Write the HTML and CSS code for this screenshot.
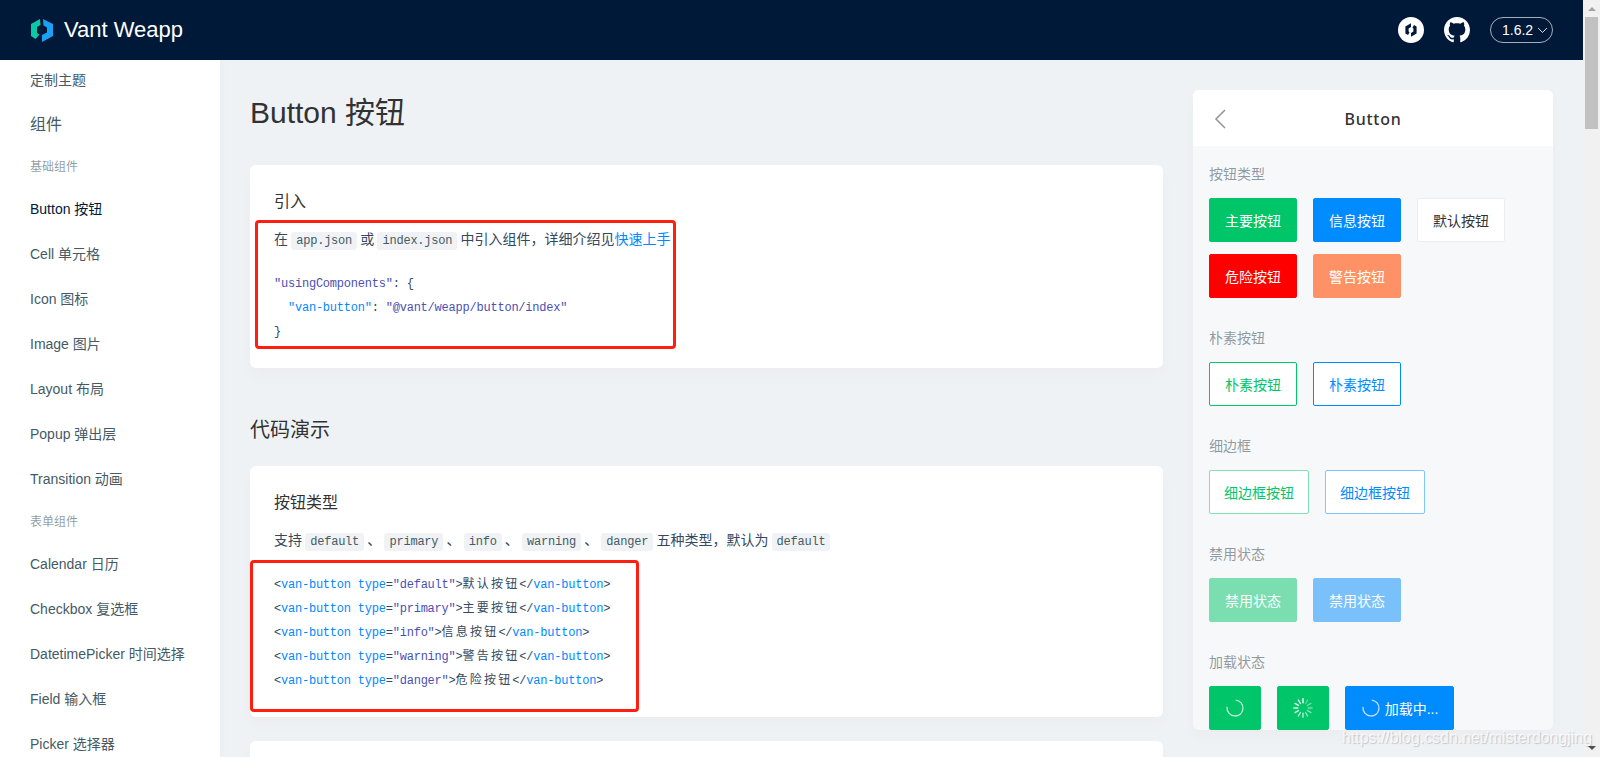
FILE: index.html
```html
<!DOCTYPE html>
<html lang="zh">
<head>
<meta charset="utf-8">
<title>Button 按钮 - Vant Weapp</title>
<link rel="stylesheet" href="styles.css">
</head>
<body>
<div class="page">
  <header class="topbar">
    <div class="brand">
      <svg class="logo" viewBox="0 0 22 24" width="22" height="24">
        <polygon points="0,6 9,1 9.5,7 6,9 6,15 8.5,16.5 4.5,21 0,18" fill="#0cc8a6"/>
        <polygon points="12,1 22,6 22,18 11,24 11,17 16,14.5 16,9.5 12.5,7.5" fill="#1aa0f5"/>
      </svg>
      <span class="brand-name">Vant Weapp</span>
    </div>
    <div class="top-actions">
      <svg class="round-icon" viewBox="0 0 26 26" width="26" height="26">
        <circle cx="13" cy="13" r="13" fill="#fff"/>
        <polygon points="13,6.3 7.4,9.5 7.4,16.5 10,18 11.6,15.3 10.6,14.6 10.6,11.4 13,10" fill="#001938"/>
        <polygon points="13,19.7 18.6,16.5 18.6,9.5 16,8 14.4,10.7 15.4,11.4 15.4,14.6 13,16" fill="#001938"/>
      </svg>
      <svg class="round-icon" viewBox="0 0 16 16" width="26" height="26">
        <path fill="#fff" d="M8 0C3.58 0 0 3.58 0 8c0 3.54 2.29 6.53 5.47 7.59.4.07.55-.17.55-.38 0-.19-.01-.82-.01-1.49-2.01.37-2.53-.49-2.69-.94-.09-.23-.48-.94-.82-1.13-.28-.15-.68-.52-.01-.53.63-.01 1.08.58 1.23.82.72 1.21 1.87.87 2.33.66.07-.52.28-.87.51-1.07-1.78-.2-3.64-.89-3.64-3.95 0-.87.31-1.59.82-2.15-.08-.2-.36-1.02.08-2.12 0 0 .67-.21 2.2.82.64-.18 1.32-.27 2-.27s1.36.09 2 .27c1.53-1.04 2.2-.82 2.2-.82.44 1.1.16 1.92.08 2.12.51.56.82 1.27.82 2.15 0 3.07-1.87 3.75-3.65 3.95.29.25.54.73.54 1.48 0 1.07-.01 1.93-.01 2.2 0 .21.15.46.55.38A8.01 8.01 0 0 0 16 8c0-4.42-3.58-8-8-8z"/>
      </svg>
      <div class="version">
        <span>1.6.2</span>
        <svg viewBox="0 0 12 8" width="11" height="7"><path d="M1 1.2 L6 6.2 L11 1.2" fill="none" stroke="#fff" stroke-width="1"/></svg>
      </div>
    </div>
  </header>
  <div class="body-row">
    <nav class="sidebar">
      <a class="nav-first">定制主题</a>
      <div class="nav-title">组件</div>
      <div class="nav-group nav-group-top">基础组件</div>
      <a class="nav-item active">Button 按钮</a>
      <a class="nav-item">Cell 单元格</a>
      <a class="nav-item">Icon 图标</a>
      <a class="nav-item">Image 图片</a>
      <a class="nav-item">Layout 布局</a>
      <a class="nav-item">Popup 弹出层</a>
      <a class="nav-item">Transition 动画</a>
      <div class="nav-group">表单组件</div>
      <a class="nav-item">Calendar 日历</a>
      <a class="nav-item">Checkbox 复选框</a>
      <a class="nav-item">DatetimePicker 时间选择</a>
      <a class="nav-item">Field 输入框</a>
      <a class="nav-item">Picker 选择器</a>
    </nav>
    <main class="doc">
      <h1 class="doc-title">Button 按钮</h1>
      <section class="card">
        <h3 class="card-title">引入</h3>
        <p class="card-text">在 <code class="chip">app.json</code> 或 <code class="chip">index.json</code> 中引入组件，详细介绍见<a class="link">快速上手</a></p>
        <div class="code">
          <div class="code-line"><span class="str">"usingComponents"</span>: {</div>
          <div class="code-line">  <span class="key">"van-button"</span>: <span class="str">"@vant/weapp/button/index"</span></div>
          <div class="code-line">}</div>
        </div>
        <div class="mark mark-a"></div>
      </section>
      <h2 class="doc-section">代码演示</h2>
      <section class="card">
        <h3 class="card-title">按钮类型</h3>
        <p class="card-text">支持 <code class="chip">default</code> 、 <code class="chip">primary</code> 、 <code class="chip">info</code> 、 <code class="chip">warning</code> 、 <code class="chip">danger</code> 五种类型，默认为 <code class="chip">default</code></p>
        <div class="code">
          <div class="code-line">&lt;<span class="key">van-button</span> <span class="key">type</span>=<span class="str">"default"</span>&gt;<span class="han">默认按钮</span>&lt;/<span class="key">van-button</span>&gt;</div>
          <div class="code-line">&lt;<span class="key">van-button</span> <span class="key">type</span>=<span class="str">"primary"</span>&gt;<span class="han">主要按钮</span>&lt;/<span class="key">van-button</span>&gt;</div>
          <div class="code-line">&lt;<span class="key">van-button</span> <span class="key">type</span>=<span class="str">"info"</span>&gt;<span class="han">信息按钮</span>&lt;/<span class="key">van-button</span>&gt;</div>
          <div class="code-line">&lt;<span class="key">van-button</span> <span class="key">type</span>=<span class="str">"warning"</span>&gt;<span class="han">警告按钮</span>&lt;/<span class="key">van-button</span>&gt;</div>
          <div class="code-line">&lt;<span class="key">van-button</span> <span class="key">type</span>=<span class="str">"danger"</span>&gt;<span class="han">危险按钮</span>&lt;/<span class="key">van-button</span>&gt;</div>
        </div>
        <div class="mark mark-b"></div>
      </section>
      <section class="card card-next"></section>
    </main>
    <aside class="preview">
      <div class="preview-head">
        <svg class="back" viewBox="0 0 12 20" width="12" height="20"><path d="M11 1 L2 10 L11 19" fill="none" stroke="#969799" stroke-width="1.6"/></svg>
        <span class="preview-title">Button</span>
      </div>
      <div class="preview-body">
        <div class="demo-title">按钮类型</div>
        <div class="demo-row">
          <span class="btn w88 green">主要按钮</span>
          <span class="btn w88 blue">信息按钮</span>
          <span class="btn w88 plain-default">默认按钮</span>
          <span class="btn w88 red">危险按钮</span>
          <span class="btn w88 orange">警告按钮</span>
        </div>
        <div class="demo-title">朴素按钮</div>
        <div class="demo-row">
          <span class="btn w88 line-green">朴素按钮</span>
          <span class="btn w88 line-blue">朴素按钮</span>
        </div>
        <div class="demo-title">细边框</div>
        <div class="demo-row">
          <span class="btn w100 hair-green">细边框按钮</span>
          <span class="btn w100 hair-blue">细边框按钮</span>
        </div>
        <div class="demo-title">禁用状态</div>
        <div class="demo-row">
          <span class="btn w88 green faded">禁用状态</span>
          <span class="btn w88 blue faded">禁用状态</span>
        </div>
        <div class="demo-title">加载状态</div>
        <div class="demo-row">
          <span class="btn w52 green">
            <svg viewBox="0 0 20 20" width="20" height="20"><circle cx="10" cy="10" r="8" fill="none" stroke="#fff" stroke-opacity=".75" stroke-width="1.3" stroke-dasharray="38 50" transform="rotate(-85 10 10)"/></svg>
          </span>
          <span class="btn w52 green">
            <svg viewBox="0 0 20 20" width="20" height="20" stroke="#fff" stroke-width="1.4" stroke-linecap="round">
              <path d="M10 0.8V4.8"/><path d="M14.6 2L12.6 5.5" stroke-opacity=".35"/><path d="M18 5.4L14.5 7.4" stroke-opacity=".4"/><path d="M19.2 10H15.2" stroke-opacity=".45"/><path d="M18 14.6L14.5 12.6" stroke-opacity=".5"/><path d="M14.6 18L12.6 14.5" stroke-opacity=".6"/><path d="M10 19.2V15.2" stroke-opacity=".7"/><path d="M5.4 18L7.4 14.5" stroke-opacity=".75"/><path d="M2 14.6L5.5 12.6" stroke-opacity=".8"/><path d="M0.8 10H4.8" stroke-opacity=".85"/><path d="M2 5.4L5.5 7.4" stroke-opacity=".9"/><path d="M5.4 2L7.4 5.5" stroke-opacity=".95"/>
            </svg>
          </span>
          <span class="btn w109 blue loading-text">
            <svg viewBox="0 0 20 20" width="20" height="20"><circle cx="10" cy="10" r="8" fill="none" stroke="#fff" stroke-opacity=".75" stroke-width="1.3" stroke-dasharray="38 50" transform="rotate(-85 10 10)"/></svg>
            <span>加载中...</span>
          </span>
        </div>
      </div>
    </aside>
  </div>
</div>
<div class="scrollbar">
  <span class="arrow-up"></span>
  <span class="thumb"></span>
  <span class="arrow-down"></span>
</div>
<div class="watermark">https://blog.csdn.net/misterdongjing</div>
</body>
</html>
```
FILE: styles.css
```css
* { box-sizing: border-box; }
html, body { margin: 0; height: 757px; overflow: hidden; }
body {
  display: flex;
  position: relative;
  font-family: "Liberation Sans", "Noto Sans CJK SC", sans-serif;
  color: #323233;
  background: #eff2f5;
}
.page { flex: 1; min-width: 0; display: flex; flex-direction: column; }
.topbar {
  height: 60px;
  flex: none;
  background: #001938;
  display: flex;
  align-items: center;
  justify-content: space-between;
  padding: 0 30px 0 31px;
  color: #fff;
}
.brand { display: flex; align-items: center; gap: 11px; }
.logo { display: block; }
.brand-name { font-size: 22px; line-height: 28px; }
.top-actions { display: flex; align-items: center; gap: 20px; }
.round-icon { display: block; }
.version {
  width: 63px;
  height: 26px;
  border: 1px solid rgba(255,255,255,.65);
  border-radius: 13px;
  display: flex;
  align-items: center;
  gap: 4px;
  padding-left: 11px;
  font-size: 14px;
}
.body-row { flex: 1; min-height: 0; display: flex; overflow: hidden; }
.sidebar {
  width: 220px;
  flex: none;
  background: #fff;
  padding-left: 30px;
  color: #455a64;
  font-size: 14px;
  box-shadow: 0 0 8px rgba(0,25,56,.03);
}
.nav-first { display: flex; align-items: center; height: 40px; padding-bottom: 3px; }
.nav-title { height: 46px; display: flex; align-items: center; font-size: 16px; }
.nav-group { height: 40px; display: flex; align-items: center; padding-bottom: 3px; font-size: 12px; color: rgba(69,90,100,.6); }
.nav-group-top { height: 41px; }
.nav-item { display: flex; align-items: center; height: 45px; padding-bottom: 4px; }
.nav-item.active { color: #001938; }
.doc { width: 973px; flex: none; padding: 30px 30px 0; }
.doc-title { margin: 0 0 29px; font-size: 30px; line-height: 46px; font-weight: 400; color: #323233; }
.doc-section { margin: 48px 0 22px; font-size: 20px; line-height: 28px; font-weight: 400; color: #323233; }
.card {
  position: relative;
  background: #fff;
  border-radius: 6px;
  padding: 24px;
  margin-bottom: 24px;
  box-shadow: 0 8px 12px #ebedf0;
}
.card-next { height: 200px; }
.card-title { margin: 0 0 11px; font-size: 16px; line-height: 26px; font-weight: 400; color: #323233; }
.card-text { margin: 0; font-size: 14px; line-height: 26px; color: #34495e; white-space: nowrap; word-spacing: -.7px; }
.chip {
  display: inline-block;
  padding: 0 5px;
  background: #f0f2f5;
  border-radius: 3px;
  font-family: "Liberation Mono", "Noto Sans CJK SC", monospace;
  font-size: 12px;
  letter-spacing: -.22px;
  line-height: 18px;
  color: #455a64;
}
.link { color: #0089ff; }
.code {
  margin: 20px 0 0;
  font-family: "Liberation Mono", "Noto Sans CJK SC", monospace;
  font-size: 12px;
  letter-spacing: -.22px;
  line-height: 24px;
  color: #34495e;
}
.code-line { height: 24px; white-space: pre; }
.key { color: #0089ff; }
.str { color: #4b4fb3; }
.han { letter-spacing: 2.2px; }
.mark {
  position: absolute;
  border: 3px solid #ff1e10;
  border-radius: 4px;
  pointer-events: none;
}
.mark-a { left: 5px; top: 55px; width: 421px; height: 129px; }
.mark-b { left: 0; top: 94px; width: 389px; height: 152px; }
.preview {
  width: 360px;
  height: 640px;
  margin-top: 30px;
  flex: none;
  background: #f7f8fa;
  border-radius: 6px;
  overflow: hidden;
  box-shadow: 0 8px 12px #ebedf0;
}
.preview-head {
  height: 56px;
  background: #fff;
  display: grid;
  grid-template-columns: 1fr auto 1fr;
  align-items: center;
  padding: 2px 21px 0;
}
.back { display: block; }
.preview-title {
  font-family: "Noto Sans", "Liberation Sans", sans-serif;
  font-size: 16px;
  font-weight: 500;
  color: #323233;
  letter-spacing: .7px;
}
.preview-body { padding: 18px 16px 0; }
.demo-title { font-size: 14px; line-height: 20px; color: rgba(69,90,100,.6); margin-bottom: 14px; }
.demo-row { display: flex; flex-wrap: wrap; gap: 12px 16px; margin-bottom: 30px; }
.btn {
  display: flex;
  align-items: center;
  justify-content: center;
  height: 44px;
  border-radius: 2px;
  font-size: 14px;
  border: 1px solid transparent;
  color: #fff;
}
.w88 { width: 88px; }
.w100 { width: 100px; }
.w52 { width: 52px; }
.w109 { width: 109px; }
.green { background: #00c569; border-color: #00c569; }
.blue { background: #008cff; border-color: #008cff; }
.red { background: #f00; border-color: #f00; }
.orange { background: #ff9166; border-color: #ff9166; }
.plain-default { background: #fff; border-color: #ebedf0; color: #323233; }
.line-green { background: #fff; border-color: #00c569; color: #00c569; }
.line-blue { background: #fff; border-color: #008cff; color: #008cff; }
.hair-green { background: #fff; border-color: #7fe2b4; color: #00c569; }
.hair-blue { background: #fff; border-color: #7fc5ff; color: #008cff; }
.faded { opacity: .5; }
.loading-text { gap: 4px; }
.scrollbar {
  width: 17px;
  flex: none;
  background: #f1f1f1;
  display: flex;
  flex-direction: column;
  align-items: center;
}
.arrow-up {
  margin-top: 7px;
  border-left: 4px solid transparent;
  border-right: 4px solid transparent;
  border-bottom: 4px solid #a3a3a3;
}
.thumb { width: 13px; height: 112px; margin-top: 6px; background: #c1c1c1; }
.arrow-down {
  margin-top: auto;
  margin-bottom: 7px;
  border-left: 4px solid transparent;
  border-right: 4px solid transparent;
  border-top: 4px solid #505050;
}
.watermark {
  position: absolute;
  right: 8px;
  top: 727px;
  font-size: 15.9px;
  line-height: 22px;
  color: rgba(255,255,255,.75);
  text-shadow: 1px 1px 1px rgba(0,0,0,.18);
  white-space: nowrap;
}
```
